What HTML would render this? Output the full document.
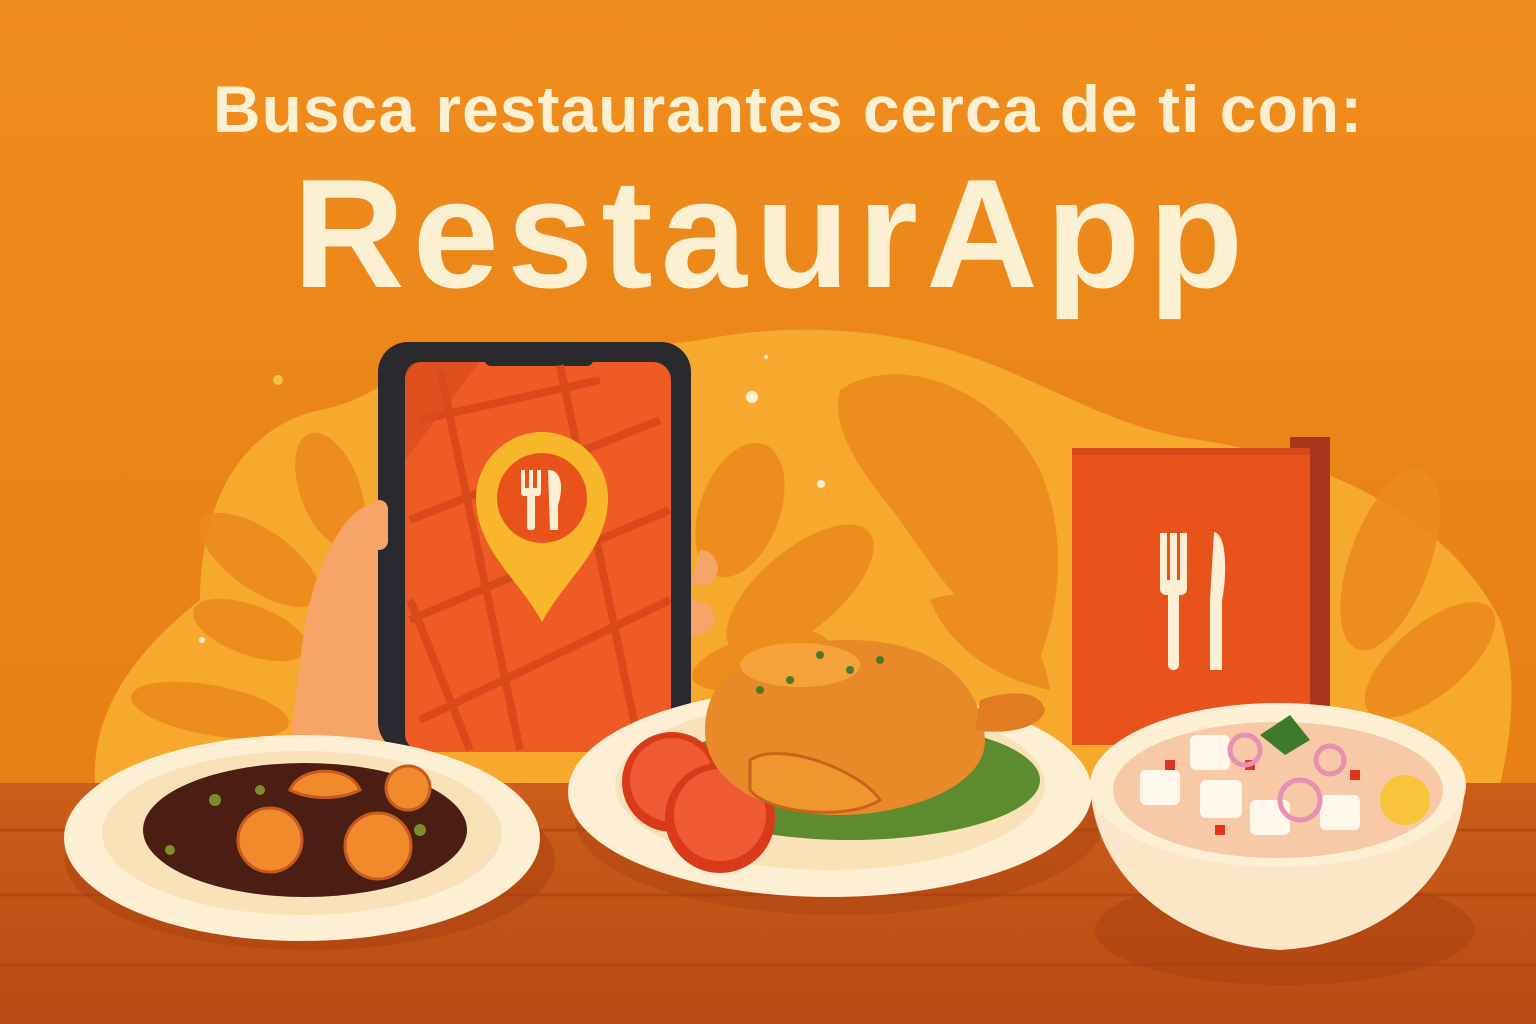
<!DOCTYPE html>
<html><head><meta charset="utf-8"><style>
html,body{margin:0;padding:0;width:1536px;height:1024px;overflow:hidden}
svg{display:block}
text{font-family:"Liberation Sans","DejaVu Sans",sans-serif;font-weight:bold;fill:#FCF0D2}
</style></head><body>
<svg width="1536" height="1024" viewBox="0 0 1536 1024">
<defs>
<linearGradient id="bg" x1="0" y1="0" x2="0" y2="1">
<stop offset="0" stop-color="#EF8D1C"/><stop offset="1" stop-color="#E57B16"/></linearGradient>
<linearGradient id="tb" x1="0" y1="0" x2="0" y2="1">
<stop offset="0" stop-color="#CC5E1B"/><stop offset="1" stop-color="#B84A14"/></linearGradient>
</defs>
<rect width="1536" height="1024" fill="url(#bg)"/>
<text x="788" y="132" font-size="66" text-anchor="middle" letter-spacing="1">Busca restaurantes cerca de ti con:</text>
<text x="772" y="287" font-size="155" text-anchor="middle" letter-spacing="8">RestaurApp</text>
<path d="M95 785 C90 700 150 640 200 600 C200 520 230 430 320 410 C370 400 380 380 420 370 C520 350 640 350 700 340 C800 320 900 330 980 360 C1060 390 1120 430 1200 440 C1330 460 1450 520 1500 620 C1520 680 1510 740 1500 785 Z" fill="#F6A92C"/>
<g fill="#EC8B1E" opacity="0.9">
<ellipse cx="260" cy="560" rx="70" ry="30" transform="rotate(35 260 560)"/>
<ellipse cx="250" cy="630" rx="60" ry="25" transform="rotate(20 250 630)"/>
<ellipse cx="210" cy="710" rx="80" ry="25" transform="rotate(10 210 710)"/>
<ellipse cx="330" cy="490" rx="30" ry="60" transform="rotate(-20 330 490)"/>
<ellipse cx="740" cy="510" rx="40" ry="70" transform="rotate(20 740 510)"/>
<ellipse cx="800" cy="590" rx="40" ry="90" transform="rotate(50 800 590)"/>
<ellipse cx="760" cy="660" rx="70" ry="25" transform="rotate(-15 760 660)"/>
<path d="M840 390 C900 350 1000 390 1040 470 C1070 540 1060 620 1030 680 C980 630 940 580 900 520 C860 470 830 430 840 390Z"/>
<path d="M920 480 C960 460 1030 500 1040 560 C1000 560 950 530 920 480Z"/>
<path d="M930 600 C980 580 1040 620 1050 690 C1000 680 950 650 930 600Z"/>
<ellipse cx="1390" cy="560" rx="40" ry="95" transform="rotate(20 1390 560)"/>
<ellipse cx="1430" cy="660" rx="35" ry="80" transform="rotate(50 1430 660)"/>
</g>
<g fill="#FCEFD4"><circle cx="752" cy="397" r="6"/><circle cx="821" cy="484" r="4"/><circle cx="278" cy="380" r="5" fill="#F7C04A"/><circle cx="202" cy="640" r="3"/><circle cx="766" cy="357" r="2"/></g>
<rect x="0" y="783" width="1536" height="241" fill="url(#tb)"/>
<g stroke="#A9420F" stroke-width="3" opacity="0.6">
<line x1="0" y1="830" x2="1536" y2="830"/><line x1="0" y1="895" x2="1536" y2="895"/><line x1="0" y1="965" x2="1536" y2="965"/></g>
<path d="M290 740 C300 680 300 620 320 570 C335 535 350 510 370 505 C390 502 395 520 392 545 L390 740 Z" fill="#F6A468"/>
<path d="M700 550 C720 550 725 580 705 585 L690 585 Z M690 600 C720 600 722 630 700 635 L690 635Z" fill="#F6A468"/>
<rect x="378" y="342" width="313" height="410" rx="30" fill="#2A2A2E"/>
<rect x="405" y="362" width="266" height="390" rx="18" fill="#EE5B24"/>
<rect x="485" y="354" width="108" height="12" rx="6" fill="#2A2A2E"/>
<g stroke="#D4461A" stroke-width="8" fill="none" opacity="0.8">
<path d="M420 420 L600 380 M410 520 L660 420 M410 620 L670 510 M420 720 L670 600"/>
<path d="M440 370 L520 750 M560 365 L640 750 M410 600 L470 750"/>
</g>
<path d="M405 380 C405 370 410 362 420 362 L480 362 L405 460Z" fill="#D84C1E" opacity="0.7"/>
<rect x="370" y="500" width="18" height="50" rx="9" fill="#F6A468"/>
<path d="M542 622 C520 580 476 550 476 498 C476 462 506 432 542 432 C578 432 608 462 608 498 C608 550 564 580 542 622Z" fill="#F8B62B"/>
<circle cx="542" cy="498" r="45" fill="#E9531B"/>
<g fill="#FCEFD4"><rect x="521" y="470" width="4" height="22"/><rect x="529" y="470" width="4" height="22"/><rect x="537" y="470" width="4" height="22"/><rect x="521" y="488" width="20" height="8" rx="3"/><rect x="527" y="490" width="8" height="40" rx="3"/>
<path d="M548 470 C565 470 562 495 558 505 L558 530 L550 530 Z"/></g>
<path d="M1290 437 L1330 437 L1330 740 L1290 740Z" fill="#A8361A"/>
<path d="M1072 448 L1310 448 L1310 745 L1072 745Z" fill="#E8531C"/>
<path d="M1072 448 L1310 448 L1310 455 L1072 455Z" fill="#D94818"/>
<g fill="#FCEFD4"><rect x="1160" y="533" width="7" height="55"/><rect x="1170" y="533" width="7" height="55"/><rect x="1180" y="533" width="7" height="55"/><rect x="1160" y="580" width="27" height="15" rx="6"/><rect x="1168" y="590" width="11" height="80" rx="5"/>
<path d="M1214 532 C1230 535 1225 590 1222 600 L1222 670 L1210 670 L1210 600 Z"/></g>
<ellipse cx="310" cy="860" rx="245" ry="90" fill="#A8400F" opacity="0.5"/>
<ellipse cx="302" cy="838" rx="238" ry="103" fill="#FCEFD4"/>
<ellipse cx="302" cy="833" rx="200" ry="82" fill="#F9E2B8"/>
<ellipse cx="305" cy="830" rx="162" ry="67" fill="#4A1E12"/>
<g fill="#7E8C2A"><circle cx="215" cy="800" r="6"/><circle cx="170" cy="850" r="5"/><circle cx="260" cy="790" r="5"/><circle cx="420" cy="830" r="6"/><circle cx="380" cy="870" r="5"/></g>
<g fill="#F08A2C" stroke="#C85A1A" stroke-width="3">
<path d="M290 790 C300 765 350 765 360 790 C340 800 310 800 290 790Z"/>
<circle cx="270" cy="840" r="32"/><circle cx="378" cy="846" r="33"/><circle cx="408" cy="788" r="22"/>
</g>
<ellipse cx="840" cy="820" rx="265" ry="95" fill="#A8400F" opacity="0.4"/>
<ellipse cx="830" cy="792" rx="262" ry="105" fill="#FCEFD4"/>
<ellipse cx="830" cy="785" rx="215" ry="85" fill="#F9E2B8"/>
<ellipse cx="850" cy="780" rx="190" ry="60" fill="#5C8C2E"/>
<circle cx="672" cy="782" r="50" fill="#D83A1A"/><circle cx="672" cy="780" r="42" fill="#EE5A34"/>
<circle cx="720" cy="818" r="55" fill="#D83A1A"/><circle cx="720" cy="815" r="46" fill="#EE5A34"/>
<path d="M705 730 C705 660 780 640 850 640 C920 640 980 670 985 740 C985 790 900 815 840 815 C760 815 705 780 705 730Z" fill="#E98A2A"/>
<path d="M980 700 C1010 690 1040 690 1045 710 C1040 730 1000 735 975 730Z" fill="#E27C22"/>
<ellipse cx="800" cy="665" rx="60" ry="22" fill="#F5A23C"/>
<path d="M750 760 C780 740 860 770 880 800 C850 820 770 815 750 790Z" fill="#F0962E" stroke="#C8641A" stroke-width="3"/>
<g fill="#4C7A28"><circle cx="790" cy="680" r="4"/><circle cx="820" cy="655" r="4"/><circle cx="850" cy="670" r="4"/><circle cx="760" cy="690" r="4"/><circle cx="880" cy="660" r="4"/></g>
<ellipse cx="1285" cy="930" rx="190" ry="55" fill="#A8400F" opacity="0.5"/>
<path d="M1090 785 C1095 880 1180 945 1280 950 C1380 945 1460 880 1465 785Z" fill="#FBE6C8"/>
<ellipse cx="1278" cy="785" rx="188" ry="82" fill="#FCEFD4"/>
<ellipse cx="1278" cy="790" rx="165" ry="68" fill="#F7C9A6"/>
<g fill="#FFF6EC"><rect x="1190" y="735" width="40" height="35" rx="6"/><rect x="1140" y="770" width="40" height="35" rx="6"/><rect x="1200" y="780" width="42" height="38" rx="6"/><rect x="1320" y="795" width="40" height="35" rx="6"/><rect x="1250" y="800" width="40" height="35" rx="6"/></g>
<g fill="#E0341E"><rect x="1165" y="760" width="10" height="10"/><rect x="1245" y="760" width="10" height="10"/><rect x="1350" y="770" width="10" height="10"/><rect x="1215" y="825" width="10" height="10"/></g>
<g fill="none" stroke="#E890B0" stroke-width="5"><circle cx="1245" cy="750" r="15"/><circle cx="1300" cy="800" r="20"/><circle cx="1330" cy="760" r="14"/></g>
<circle cx="1405" cy="800" r="25" fill="#F8C53A"/>
<path d="M1260 735 L1290 715 L1310 740 L1285 755Z" fill="#3E7A2A"/>
</svg>
</body></html>
